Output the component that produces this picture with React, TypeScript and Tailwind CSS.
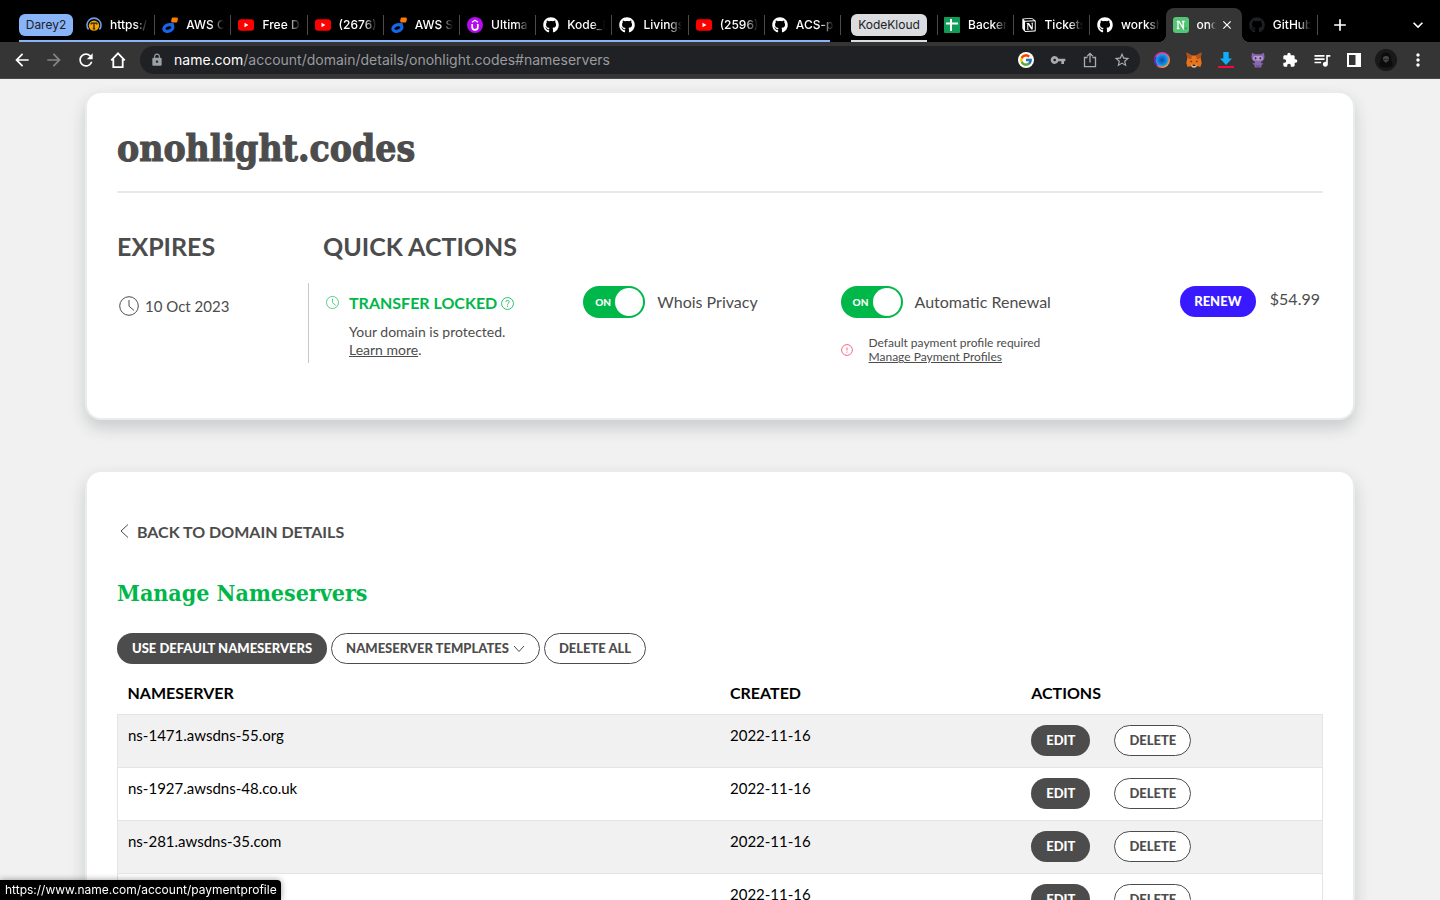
import React from "react";
import { FaGithub } from "react-icons/fa";
import { FcGoogle } from "react-icons/fc";
import { SiNotion } from "react-icons/si";
import {
  MdAdd,
  MdArrowBack,
  MdArrowForward,
  MdClose,
  MdExtension,
  MdKeyboardArrowDown,
  MdLock,
  MdMoreVert,
  MdQueueMusic,
  MdRefresh,
  MdStarOutline,
  MdVpnKey,
} from "react-icons/md";

/* ---------- favicons ---------- */

function TerminalIcon() {
  return (
    <svg viewBox="0 0 16 16" className="size-4">
      <path d="M2.6 12.6A7 7 0 1 1 13.4 12.6" fill="none" stroke="#6b9df0" strokeWidth="1.6" />
      <circle cx="8" cy="8.6" r="5.2" fill="#f5a300" />
      <path d="M5 6.2h6M8 6.2v5.6M5.2 6v1.6M10.8 6v1.6M6.8 11.8h2.4" stroke="#2b2410" strokeWidth="1.3" fill="none" />
    </svg>
  );
}

function CloudRingIcon() {
  return (
    <svg viewBox="0 0 16 16" className="size-4">
      <ellipse cx="6.4" cy="11" rx="4.6" ry="3.2" fill="none" stroke="#1566e8" strokeWidth="3.2" transform="rotate(-18 6.4 11)" />
      <path d="M8.600 5.600l3.400 1-.4 3-3-1.200z" fill="#1566e8" />
      <path d="M11 .4h3.400c1 0 1.600.6 1.500 1.500l-.4 2c-.2 1-.9 1.500-1.800 1.500h-3c-1.100 0-1.700-.7-1.500-1.700l.3-1.700C9.700 1 10.200.4 11 .4z" fill="#ff7a00" />
    </svg>
  );
}

function YoutubeIcon() {
  return (
    <svg viewBox="0 0 16 16" className="size-4">
      <rect x="0" y="2.2" width="16" height="11.6" rx="3" fill="#f00" />
      <path d="M6.5 5.700v4.600L10.400 8z" fill="#fff" />
    </svg>
  );
}

function UdemyIcon() {
  return (
    <svg viewBox="0 0 16 16" className="size-4">
      <circle cx="8" cy="8" r="8" fill="#b30cf0" />
      <path d="M5.200 7v3.200a2.800 2.600 0 0 0 5.600 0V7" fill="none" stroke="#fff" strokeWidth="1.7" />
      <path d="M5 5.200L8 3.200l3 2" fill="none" stroke="#fff" strokeWidth="1.3" />
    </svg>
  );
}

function SheetsIcon() {
  return (
    <svg viewBox="0 0 16 16" className="size-4">
      <rect width="16" height="16" rx="1" fill="#0f9d58" />
      <path d="M7 2v12M2 6.500h12" stroke="#fff" strokeWidth="2" fill="none" />
    </svg>
  );
}

function NameIcon() {
  return (
    <svg viewBox="0 0 16 16" className="size-4 shrink-0">
      <rect width="16" height="16" rx="3" fill="#54c574" />
      <path d="M3.800 4.500h2.200l4.200 6.800V4.500M5 4.500v7M3.800 11.500h2.600M9 4.500h2.600" stroke="#fff" strokeWidth="1.3" fill="none" />
      <circle cx="13" cy="11.3" r=".8" fill="#247a40" />
    </svg>
  );
}

const github = <FaGithub className="size-4 text-white" />;

type Tab = { title: string; icon: React.ReactNode };

const groupedTabs: Tab[] = [
  { title: "https://", icon: <TerminalIcon /> },
  { title: "AWS Cloud", icon: <CloudRingIcon /> },
  { title: "Free Dev", icon: <YoutubeIcon /> },
  { title: "(2676)", icon: <YoutubeIcon /> },
  { title: "AWS Set", icon: <CloudRingIcon /> },
  { title: "Ultimate", icon: <UdemyIcon /> },
  { title: "Kode_K", icon: github },
  { title: "Livings", icon: github },
  { title: "(2596)", icon: <YoutubeIcon /> },
  { title: "ACS-pr", icon: github },
];

const looseTabs: Tab[] = [
  { title: "Backend", icon: <SheetsIcon /> },
  { title: "Tickets", icon: <SiNotion className="size-[14px] text-white" /> },
  { title: "worksh", icon: github },
];

function BrowserTab({ tab, divider = true }: { tab: Tab; divider?: boolean }) {
  return (
    <button
      className={
        divider
          ? "flex h-5 min-w-0 flex-1 items-center gap-2 border-r border-[#4b4b4b] pr-1.5 pl-[7px]"
          : "flex h-5 min-w-0 flex-1 items-center gap-2 pr-1.5 pl-[7px]"
      }
    >
      <span className="flex w-4 shrink-0 justify-center">{tab.icon}</span>
      <span className="min-w-0 flex-1 overflow-hidden text-left whitespace-nowrap [mask-image:linear-gradient(to_right,black_65%,transparent)]">
        {tab.title}
      </span>
    </button>
  );
}

function TabStrip() {
  return (
    <div className="flex h-[42px] bg-black pl-[19px] text-xs font-medium text-white">
      <div className="relative flex min-w-0 grow-[10] basis-[60px] items-center pt-2">
        <button className="mr-1.5 h-[22px] w-[54px] shrink-0 rounded-md bg-[#8ab4f8] font-normal text-[#202124]">
          Darey2
        </button>
        {groupedTabs.map((tab, i) => (
          <BrowserTab key={i} tab={tab} />
        ))}
        <span className="absolute right-[11px] bottom-0 left-0 h-0.5 bg-[#8ab4f8]" />
      </div>
      <div className="flex items-center px-2.5 pt-2">
        <button className="relative h-[22px] w-[76px] rounded-md bg-[#dadce0] font-normal text-[#202124]">
          KodeKloud
          <span className="absolute top-[26px] left-0 h-0.5 w-full bg-[#dadce0]" />
        </button>
      </div>
      <div className="grid min-w-0 grow-[5] basis-0 grid-cols-5">
        <div className="col-span-3 flex min-w-0 items-center pt-2">
          <span className="-mr-px h-5 w-px shrink-0 bg-[#4b4b4b]" />
          {looseTabs.map((tab, i) => (
            <BrowserTab key={i} tab={tab} divider={i < 2} />
          ))}
        </div>
        <div className="relative mt-2 flex min-w-0 items-center rounded-t-lg bg-[#353535] pr-2 pl-[7px]">
          <span className="absolute bottom-0 -left-2 size-2 bg-[radial-gradient(circle_at_top_left,transparent_8px,#353535_8px)]" />
          <span className="absolute -right-2 bottom-0 size-2 bg-[radial-gradient(circle_at_top_right,transparent_8px,#353535_8px)]" />
          <NameIcon />
          <span className="ml-2 min-w-0 flex-1 overflow-hidden whitespace-nowrap [mask-image:linear-gradient(to_right,black_60%,transparent)]">
            onohlight
          </span>
          <button aria-label="Close tab" className="ml-1 shrink-0">
            <MdClose className="size-[14px]" />
          </button>
        </div>
        <div className="flex min-w-0 items-center pt-2">
          <BrowserTab tab={{ title: "GitHub", icon: <FaGithub className="size-4 text-[#1f2023]" /> }} />
        </div>
      </div>
      <div className="flex w-[122px] shrink-0 items-center justify-between pt-2 pr-3 pl-3">
        <button aria-label="New tab">
          <MdAdd className="size-5" />
        </button>
        <button aria-label="Search tabs">
          <MdKeyboardArrowDown className="size-5" />
        </button>
      </div>
    </div>
  );
}

/* ---------- toolbar ---------- */

function HomeIcon() {
  return (
    <svg viewBox="0 0 16 16" className="size-4" fill="none" stroke="#fff" strokeWidth="1.8">
      <path d="M1.200 8.400L8 1.400l6.800 7M3.300 7v8.100h9.400V7" />
    </svg>
  );
}

function ShareIcon() {
  return (
    <svg viewBox="0 0 16 16" className="size-4" fill="none" stroke="#a9abad" strokeWidth="1.3">
      <path d="M5.500 5.500h-3v9.200h11V5.500h-3M8 10.500V1.800M5.200 4.200L8 1.400l2.800 2.800" />
    </svg>
  );
}

function OrbIcon() {
  return (
    <svg viewBox="0 0 16 16" className="size-4">
      <defs>
        <linearGradient id="orb-ring" x1="0" y1="0" x2="1" y2="1">
          <stop offset="0" stopColor="#f0148c" />
          <stop offset=".45" stopColor="#e0459a" />
          <stop offset="1" stopColor="#ffc400" />
        </linearGradient>
        <radialGradient id="orb-core">
          <stop offset="0" stopColor="#0a4b9c" />
          <stop offset=".6" stopColor="#1180dc" />
          <stop offset="1" stopColor="#2aa5f5" />
        </radialGradient>
      </defs>
      <circle cx="8" cy="8" r="8" fill="url(#orb-ring)" />
      <circle cx="8" cy="8" r="6.5" fill="url(#orb-core)" />
      <path d="M2 5a7 7 0 0 0 1 8.500" stroke="#4a2bd0" strokeWidth="1.5" fill="none" />
    </svg>
  );
}

function FoxIcon() {
  return (
    <svg viewBox="0 0 16 16" className="size-4">
      <path d="M.6.6L6 3.400h4L15.400.6l-.6 6 .9 4.400-1.300 4-3.600-1-1.700 1.500H6.900L5.200 14l-3.600 1L.3 11l.9-4.400z" fill="#e8731a" />
      <path d="M.6.6L6 3.400 5.200 7 1.200 6.600zM15.400.6L10 3.400l.8 3.600 4-.4z" fill="#b5511b" />
      <path d="M3.600 8.600l2.600.7-.8 1.200zM12.400 8.600l-2.600.7.8 1.200z" fill="#40302a" />
      <path d="M5.200 12l1.500 1.800h2.600L10.800 12l-.5 3-1.200.6H6.900L5.700 15z" fill="#d6bfa8" />
      <path d="M6.900 12.800h2.200l.2 1.200H6.700z" fill="#231d1b" />
    </svg>
  );
}

function DownloadIcon() {
  return (
    <svg viewBox="0 0 16 16" className="size-4">
      <path d="M5.300 0h5.400v6.500H14L8 13 2 6.500h3.300z" fill="#12aef5" />
      <rect y="14" width="16" height="2" fill="#f5083c" />
    </svg>
  );
}

function OctocatIcon() {
  return (
    <svg viewBox="0 0 16 16" className="size-4">
      <path d="M2 .8l3 1.400h6L14 .8l.5 3.800c.2 3-1.500 4.800-3.700 5.200l.9 1.700 1.500-.5-.2 1.200-1.500.6-.3 2.700H4.800l-.3-2.700L3 12.300 2.400 10.800l1.900.7.9-1.700C3 9.400 1.300 7.600 1.500 4.600z" fill="#8a68b0" />
      <rect x="3" y="4" width="10" height="4.400" rx="2.2" fill="#b79ad2" />
      <ellipse cx="5.600" cy="6.200" rx=".9" ry="1.2" fill="#4a3268" />
      <ellipse cx="10.400" cy="6.200" rx=".9" ry="1.2" fill="#4a3268" />
      <path d="M7 15.500V13M9 15.500V13" stroke="#5a3f7c" strokeWidth=".8" fill="none" />
    </svg>
  );
}

function SidePanelIcon() {
  return (
    <svg viewBox="0 0 16 16" className="size-4">
      <path d="M1 1h14v14H1zM3 3v10h6.500V3z" fill="#fff" fillRule="evenodd" />
    </svg>
  );
}

function Avatar() {
  return (
    <svg viewBox="0 0 22 22" className="size-[22px]">
      <circle cx="11" cy="11" r="11" fill="#191919" />
      <path d="M11 3.500c-3.600 0-5.200 3-5 6.500l-2 6c2 3.500 12 3.500 14 0l-2-6c.2-3.500-1.400-6.500-5-6.500z" fill="#0c0c0c" />
      <path d="M8 8.300c2-1.600 4-1.600 6 0l-.4 3.200-2.600 2.200-2.600-2.200z" fill="#4a4a4a" />
      <path d="M9 10l1.500.5M13 10l-1.500.5" stroke="#111" />
    </svg>
  );
}

function Toolbar() {
  return (
    <div className="flex h-[37px] items-center border-b border-[#4a4a4a] bg-[#353535] pr-3.5 pl-3 text-white">
      <div className="flex w-32 shrink-0 items-center gap-3">
        <button aria-label="Back"><MdArrowBack className="size-5" /></button>
        <button aria-label="Forward"><MdArrowForward className="size-5 text-[#868686]" /></button>
        <button aria-label="Reload"><MdRefresh className="size-5" /></button>
        <button aria-label="Home" className="flex size-5 items-center justify-center"><HomeIcon /></button>
      </div>
      <div className="flex h-7 min-w-0 flex-1 items-center rounded-full bg-[#202124] px-2.5">
        <MdLock className="mr-0.5 size-[14px] shrink-0 text-[#9aa0a6]" />
        <p className="min-w-0 flex-1 truncate pl-2 text-sm text-[#9a9b9e]">
          <span className="text-white">name.com</span>/account/domain/details/onohlight.codes#nameservers
        </p>
        <div className="flex items-center gap-4 text-[#a9abad]">
          <FcGoogle className="size-4 rounded-full bg-white p-px" />
          <MdVpnKey className="size-4" />
          <ShareIcon />
          <MdStarOutline className="size-4 scale-110" />
        </div>
      </div>
      <div className="flex shrink-0 items-center gap-4 pl-3.5">
        <OrbIcon />
        <FoxIcon />
        <DownloadIcon />
        <OctocatIcon />
        <MdExtension className="size-4" />
        <MdQueueMusic className="-mx-0.5 size-5" />
        <SidePanelIcon />
        <span className="-mx-[3px]"><Avatar /></span>
        <button aria-label="Menu" className="flex w-4 justify-center"><MdMoreVert className="size-5 shrink-0" /></button>
      </div>
    </div>
  );
}

/* ---------- page ---------- */

function Clock({ className }: { className: string }) {
  return (
    <svg viewBox="0 0 20 20" className={className} fill="none" stroke="currentColor">
      <circle cx="10" cy="10" r="9.3" />
      <path d="M10 4v6.200l5 4.300" />
    </svg>
  );
}

function Toggle({ label }: { label: string }) {
  return (
    <label className="flex items-center gap-3">
      <input type="checkbox" role="switch" defaultChecked className="peer sr-only" />
      <span className="flex h-8 w-[62px] shrink-0 items-center justify-between rounded-full bg-[#00b74a] pr-0.5 pl-3">
        <span className="text-[10px] font-black text-white">ON</span>
        <span className="size-7 rounded-full bg-white" />
      </span>
      <span className="whitespace-nowrap">{label}</span>
    </label>
  );
}

function DomainCard() {
  return (
    <section className="rounded-2xl border-2 border-[#eaebeb] bg-white px-[30px] pt-[34px] pb-[55px] shadow-[0_8px_16px_rgba(20,40,45,0.18)]">
      <h1 className="border-b-2 border-[#e9e9e9] pb-[22px] font-['DejaVu_Serif_Condensed','DejaVu_Serif',serif] text-[37px] leading-[42px] font-bold [-webkit-text-stroke:1px_currentColor]">
        onohlight.codes
      </h1>
      <div className="grid grid-cols-[191px_1fr] pt-[37px]">
        <h2 className="text-[25px] leading-8 font-bold">EXPIRES</h2>
        <h2 className="pl-[15px] text-[25px] leading-8 font-bold">QUICK ACTIONS</h2>
        <div className="mt-[21px] flex h-[46px] items-center gap-1.5 pl-0.5">
          <Clock className="size-5" />
          <span className="text-[15px]">10 Oct 2023</span>
        </div>
        <div className="mt-[21px] grid h-20 grid-cols-[257fr_257fr_300fr_182fr] border-l border-[#c9c9c9] pl-[17px]">
          <div className="flex gap-2.5 pt-2.5">
            <Clock className="mt-[3px] size-[13px] text-[#00b74a]" />
            <div className="text-sm leading-[18px]">
              <h3 className="mb-2.5 flex items-center gap-1 text-base leading-5 font-bold text-[#00b74a]">
                TRANSFER LOCKED
                <svg viewBox="0 0 14 14" className="size-[13px]" fill="none" stroke="currentColor">
                  <circle cx="7" cy="7" r="6.4" strokeWidth=".9" />
                  <path d="M5.200 5.500c0-2.400 3.600-2.400 3.600-.2 0 1.500-1.800 1.400-1.800 3M7 9.300v1.200" strokeWidth=".9" />
                </svg>
              </h3>
              <p>Your domain is protected.</p>
              <p><a href="#learn" className="underline">Learn more</a>.</p>
            </div>
          </div>
          <div className="pt-[3px]"><Toggle label="Whois Privacy" /></div>
          <div className="pt-[3px]">
            <Toggle label="Automatic Renewal" />
            <div className="mt-[18px] flex items-center gap-4 text-xs leading-[14px]">
              <svg viewBox="0 0 14 14" className="size-3 shrink-0" fill="none" stroke="#f5506e">
                <circle cx="7" cy="7" r="6.3" />
                <path d="M7 4v3.600M7 8.800v1.200" />
              </svg>
              <p className="whitespace-nowrap">
                Default payment profile required
                <br />
                <a href="#payment" className="underline">Manage Payment Profiles</a>
              </p>
            </div>
          </div>
          <div className="flex items-start justify-end gap-3.5 pt-[3px] pr-[3px]">
            <button className="h-[31px] w-[76px] rounded-full bg-[#3919ff] text-[13px] font-black text-white">RENEW</button>
            <span className="leading-[26px]">$54.99</span>
          </div>
        </div>
      </div>
    </section>
  );
}

const darkButton = "h-[31px] rounded-full bg-[#4c4c4c] px-[15px] text-[13px] font-black whitespace-nowrap text-white";
const lightButton = "h-[31px] rounded-full border border-[#4c4c4c] bg-white px-3.5 text-[13px] font-black whitespace-nowrap";

const servers = [
  { host: "ns-1471.awsdns-55.org", created: "2022-11-16" },
  { host: "ns-1927.awsdns-48.co.uk", created: "2022-11-16" },
  { host: "ns-281.awsdns-35.com", created: "2022-11-16" },
  { host: "ns-706.awsdns-24.net", created: "2022-11-16" },
];

function NameserversCard() {
  return (
    <section className="rounded-2xl border-2 border-[#eaebeb] bg-white px-[30px] pt-12 pb-14 shadow-[0_8px_16px_rgba(20,40,45,0.18)]">
      <a href="#details" className="flex items-center gap-2 pl-[3px] leading-6 font-bold">
        <svg viewBox="0 0 9 16" className="mb-0.5 h-4 w-[9px]" fill="none" stroke="currentColor">
          <path d="M8 1.500L1 8l7 6.500" />
        </svg>
        BACK TO DOMAIN DETAILS
      </a>
      <h2 className="mt-[33px] font-['DejaVu_Serif_Condensed','DejaVu_Serif',serif] text-[23px] leading-8 font-bold text-[#00b74a]">
        Manage Nameservers
      </h2>
      <div className="mt-6 flex gap-1">
        <button className={darkButton}>USE DEFAULT NAMESERVERS</button>
        <button className={lightButton}>
          <span className="flex items-center gap-1">
            NAMESERVER TEMPLATES
            <svg viewBox="0 0 12 8" className="h-2 w-3" fill="none" stroke="currentColor">
              <path d="M1 1l5 5.500L11 1" />
            </svg>
          </span>
        </button>
        <button className={lightButton}>DELETE ALL</button>
      </div>
      <table className="mt-2.5 w-full table-fixed border-collapse text-left text-black">
        <thead>
          <tr className="h-10">
            <th className="w-1/2 px-2.5 pb-0.5 font-bold">NAMESERVER</th>
            <th className="w-1/4 px-2.5 pb-0.5 font-bold">CREATED</th>
            <th className="w-1/4 px-2.5 pb-0.5 font-bold">ACTIONS</th>
          </tr>
        </thead>
        <tbody className="text-[15px] leading-5">
          {servers.map((server) => (
            <tr key={server.host} className="h-[53px] border border-[#e4e4e4] odd:bg-[#f1f1f1]">
              <td className="p-2.5 align-top">{server.host}</td>
              <td className="p-2.5 align-top">{server.created}</td>
              <td className="p-2.5 align-top">
                <div className="flex gap-6 text-[#4c4c4c]">
                  <button className={darkButton}>EDIT</button>
                  <button className={lightButton}>DELETE</button>
                </div>
              </td>
            </tr>
          ))}
        </tbody>
      </table>
    </section>
  );
}

export default function App() {
  return (
    <div className="relative flex h-screen flex-col overflow-hidden font-['Inter',sans-serif]">
      <TabStrip />
      <Toolbar />
      <main className="min-h-0 flex-1 overflow-y-auto bg-[#f1f1f1] px-[85px] pt-3 font-['Lato',sans-serif] text-[#4c4c4c] [scrollbar-width:none]">
        <div className="flex flex-col gap-[50px]">
          <DomainCard />
          <NameserversCard />
        </div>
      </main>
      <div className="absolute bottom-0 left-0 flex h-5 items-center rounded-tr bg-black pr-1 pl-[5px] text-xs text-white shadow-[0_0_6px_rgba(0,0,0,0.4)]">
        https://www.name.com/account/paymentprofile
      </div>
    </div>
  );
}
